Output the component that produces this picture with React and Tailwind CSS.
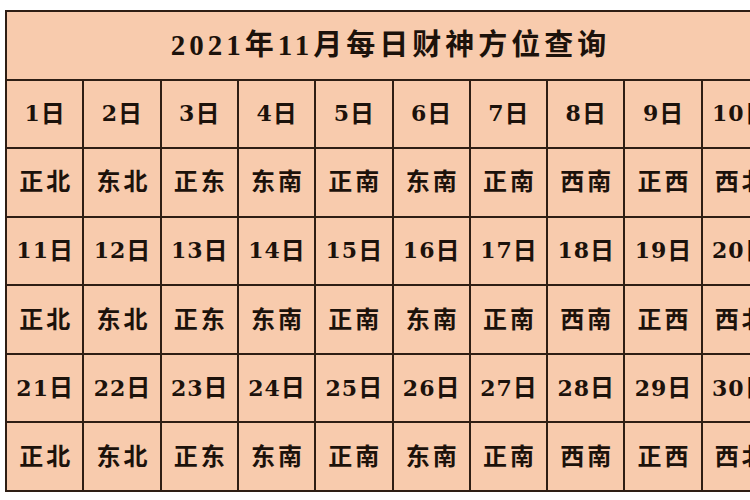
const dirs = ['正北', '东北', '正东', '东南', '正南', '东南', '正南', '西南', '正西', '西北'];

// each day row is followed by its direction row
const rows = [0, 10, 20].flatMap((start) => [
  Array.from({ length: 10 }, (_, i) => ({ num: start + i + 1 })),
  dirs.map((d) => ({ dir: d })),
]);

export default function App() {
  return (
    <div
      className="w-[750px] h-[500px] overflow-hidden bg-white pt-[10px] pl-[5px] text-[#1c120b]"
      style={{ fontFamily: '"Liberation Serif", "Noto Sans CJK SC", serif' }}
    >
      <div className="w-[775px] h-[482px] grid grid-cols-10 grid-rows-7 gap-[2px] p-[2px] bg-[#2e1e14] font-bold">
        <div className="col-span-10 bg-[#f8cbad] flex items-center justify-center text-[29px] tracking-[4px] pr-[4px]">
          2021年11月每日财神方位查询
        </div>
        {rows.map((row, r) =>
          row.map((cell, c) => (
            <div
              key={`${r}-${c}`}
              className="bg-[#f8cbad] flex items-center justify-center text-[24px] tracking-[3px] pl-[3px]"
            >
              {cell.dir ? (
                cell.dir
              ) : (
                <>
                  <span className="text-[22px] tracking-[1px]" style={{ fontFamily: '"DejaVu Serif", serif' }}>
                    {cell.num}
                  </span>
                  <span>日</span>
                </>
              )}
            </div>
          ))
        )}
      </div>
    </div>
  );
}
